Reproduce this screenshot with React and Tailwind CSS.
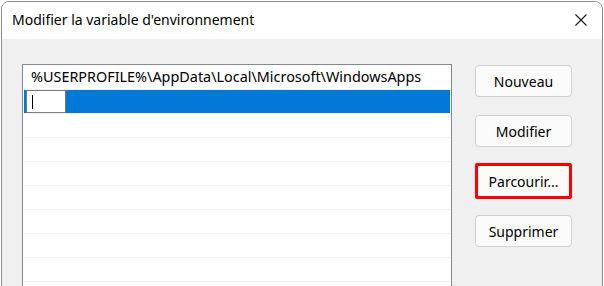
const font = { fontFamily: '"Noto Sans", "Segoe UI", sans-serif' };

const rows = ["%USERPROFILE%\\AppData\\Local\\Microsoft\\WindowsApps", "", "", "", "", "", "", "", ""];

function Button({ label, className = "" }) {
  return (
    <div
      className={
        "w-[97px] h-[32px] flex items-center justify-center rounded-[4px] border border-[#d0d0d0] bg-[#fbfbfb] text-[14px] text-black " +
        className
      }
    >
      {label}
    </div>
  );
}

export default function App() {
  return (
    <div className="w-[604px] h-[286px] bg-white overflow-hidden" style={font}>
      <div className="ml-px mt-px w-[602px] h-[300px] flex flex-col border border-[#8c8c8c] rounded-t-[8px] overflow-hidden">
        {/* title bar */}
        <div className="h-[37px] shrink-0 bg-white flex items-center justify-between pl-[10px] pr-[15px]">
          <span className="text-[14px] text-black leading-none -mt-[1px]">
            Modifier la variable d'environnement
          </span>
          <svg width="12" height="12" viewBox="0 0 12 12" className="-mt-[2px]">
            <path d="M0.5 0.5 L11.5 11.5 M11.5 0.5 L0.5 11.5" stroke="#1a1a1a" strokeWidth="1.1" fill="none" />
          </svg>
        </div>

        {/* body */}
        <div className="flex-1 bg-[#f0f0f0] flex pl-[20px] pt-[25px]">
          <div className="w-[430px] h-[240px] border border-[#828790] bg-white p-px">
            {rows.map((text, i) => (
              <div
                key={i}
                className={
                  "h-[24px] border-b border-[#f0f0f0] flex items-center " +
                  (i === 1 ? "bg-[#0078d7]" : "")
                }
              >
                {i === 1 ? (
                  <div className="ml-[2px] w-[40px] h-[23px] border border-[#7a7a7a] bg-white flex items-center">
                    <div className="ml-[5px] w-px h-[14px] bg-black" />
                  </div>
                ) : (
                  <span className="pl-[7px] text-[14.4px] text-black leading-none -mt-[1px]">{text}</span>
                )}
              </div>
            ))}
          </div>

          <div className="ml-[23px] pt-px flex flex-col">
            <Button label="Nouveau" />
            <Button label="Modifier" className="mt-[18px]" />
            <div className="mt-[16px] w-[97px] h-[36px] border-[3px] border-[#ff0000] rounded-[2px] bg-[#fbfbfb] flex items-center justify-center text-[14px] text-black">
              Parcourir...
            </div>
            <Button label="Supprimer" className="mt-[16px]" />
          </div>
        </div>
      </div>
    </div>
  );
}
